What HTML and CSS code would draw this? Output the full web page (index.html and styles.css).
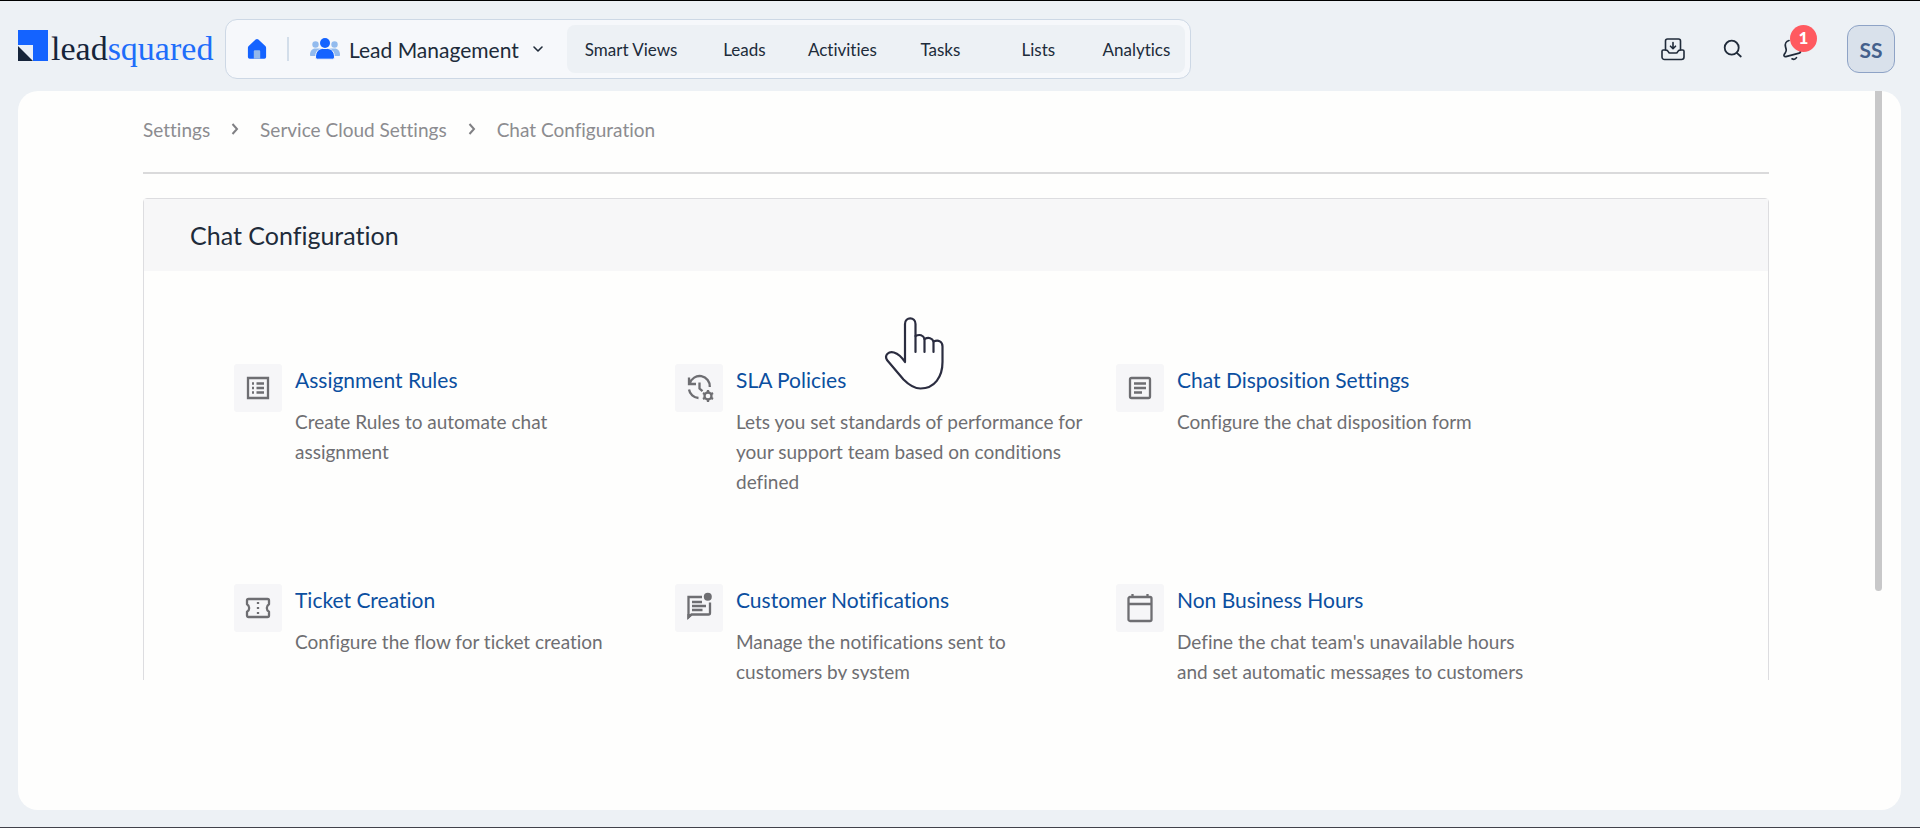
FILE: index.html
```html
<!DOCTYPE html>
<html lang="en">
<head>
    <meta charset="UTF-8">
    <title>Chat Configuration</title>
    <link rel="stylesheet" href="styles.css">
</head>
<body>
<header class="topbar">
    <a class="logo" href="#">
        <svg class="logo-mark" width="30" height="31" viewBox="0 0 30 31">
            <path d="M0 0h30v31H0z" fill="#1463ff"/>
            <path d="M0 15h15v16H0z" fill="#e9eff8"/>
            <path d="M0 16l15 15H0z" fill="#16243a"/>
        </svg>
        <span class="logo-text">lead<span class="logo-blue">squared</span></span>
    </a>
    <nav class="nav">
        <a class="nav-home" href="#" aria-label="Home">
            <svg width="20" height="22" viewBox="0 0 20 22">
                <path d="M8.6 1.6a2 2 0 0 1 2.8 0L18.300 8c.5.5.8 1.100.8 1.800V19a1.800 1.800 0 0 1-1.800 1.800H2.700A1.800 1.800 0 0 1 .9 19V9.800c0-.7.3-1.300.8-1.800z" fill="#1463ff"/>
                <path d="M6.800 13.500c0-.8.5-1.300 1.300-1.300h3.800c.8 0 1.300.5 1.300 1.300v7.300H6.800z" fill="#92b8ea"/>
            </svg>
        </a>
        <span class="nav-divider"></span>
        <button class="nav-app" type="button">
            <svg width="30" height="22" viewBox="0 0 30 22">
                <g fill="#92bbee">
                    <circle cx="5.500" cy="6.500" r="3.200"/>
                    <circle cx="24.500" cy="6.500" r="3.200"/>
                    <path d="M0 17c0-4 2-6.500 5.500-6.500h19c3.500 0 5.500 2.500 5.500 6.500 0 .7-.5 1-1 1H1c-.6 0-1-.4-1-1z"/>
                </g>
                <path d="M5.500 19c0-5 3-8.500 7-8.500h5c4 0 7 3.500 7 8.500 0 1.500-.8 2.200-2 2.200h-15c-1.200 0-2-.7-2-2.200z" fill="#1463ff" stroke="#f6f8fb" stroke-width="1"/>
                <circle cx="15" cy="5" r="5" fill="#1463ff"/>
            </svg>
            <span>Lead Management</span>
            <svg width="10" height="7" viewBox="0 0 10 7" fill="none" stroke="#202b3a" stroke-width="1.600" stroke-linecap="round" stroke-linejoin="round">
                <path d="M1 1l4 4 4-4"/>
            </svg>
        </button>
        <div class="nav-menu">
            <a class="nav-item" href="#">Smart Views</a>
            <a class="nav-item" href="#">Leads</a>
            <a class="nav-item" href="#">Activities</a>
            <a class="nav-item" href="#">Tasks</a>
            <a class="nav-item" href="#">Lists</a>
            <a class="nav-item" href="#">Analytics</a>
        </div>
    </nav>
    <div class="tools">
        <button class="tool" type="button" aria-label="Downloads">
            <svg width="24" height="23" viewBox="0 0 24 23" fill="none" stroke="#202b3a" stroke-width="1.600" stroke-linecap="round" stroke-linejoin="round">
                <path d="M4.500 12V3a2 2 0 0 1 2-2h11a2 2 0 0 1 2 2v9"/>
                <path d="M4.500 12H2.300C1.500 12 1 12.500 1 13.300V19a2.500 2.500 0 0 0 2.500 2.500h17A2.500 2.500 0 0 0 23 19v-5.700c0-.8-.5-1.300-1.300-1.300h-2.200c-1.800 0-2.500.8-3 2-.2.600-.7 1-1.300 1H8.800c-.6 0-1.100-.4-1.300-1-.5-1.200-1.200-2-3-2z"/>
                <path d="M12 4.500v6M9.500 8.200l2.500 2.500 2.500-2.500"/>
            </svg>
        </button>
        <button class="tool" type="button" aria-label="Search">
            <svg width="20" height="20" viewBox="0 0 20 20" fill="none" stroke="#202b3a" stroke-width="1.800" stroke-linecap="round">
                <circle cx="8.700" cy="8.700" r="7"/>
                <path d="M13.800 13.800l4 3.700"/>
            </svg>
        </button>
        <button class="tool tool-bell" type="button" aria-label="Notifications">
            <svg width="24" height="24" viewBox="0 0 24 24" fill="none" stroke="#202b3a" stroke-width="1.700" stroke-linecap="round" stroke-linejoin="round">
                <path d="M8 3.500C5 4.300 3.800 7 4.500 9.800l.7 2.700c.3 1.300-.2 2.400-1 3.500l-.9 1.300c-.9 1.400 0 2.700 1.600 2.300l13.300-3.500c1.600-.4 1.800-2 .5-2.900"/>
                <path d="M11 21.800c1.500.8 3.500.3 4.500-1.200"/>
            </svg>
            <span class="badge">1</span>
        </button>
        <button class="avatar" type="button">SS</button>
    </div>
</header>
<main class="page">
    <div class="content">
        <nav class="crumbs">
            <a href="#">Settings</a>
            <svg width="8" height="12" viewBox="0 0 8 12"><path d="M1.500 1l4.500 5-4.500 5" fill="none" stroke="#808084" stroke-width="2"/></svg>
            <a href="#">Service Cloud Settings</a>
            <svg width="8" height="12" viewBox="0 0 8 12"><path d="M1.500 1l4.500 5-4.500 5" fill="none" stroke="#808084" stroke-width="2"/></svg>
            <span>Chat Configuration</span>
        </nav>
        <section class="panel">
            <h1 class="panel-title">Chat Configuration</h1>
            <div class="cards">
                <article class="card">
                    <div class="card-icon">
                        <svg width="28" height="28" viewBox="0 0 28 28" fill="none" stroke="#6e6e72" stroke-width="2.300">
                            <path d="M4 4h20v20H4z"/>
                            <path d="M8 9.500h2M12.500 9.500H20M8 14h2M12.500 14H20M8 18.500h2M12.500 18.500H20"/>
                        </svg>
                    </div>
                    <div class="card-body">
                        <a class="card-title" href="#">Assignment Rules</a>
                        <p class="card-text">Create Rules to automate chat assignment</p>
                    </div>
                </article>
                <article class="card">
                    <div class="card-icon">
                        <svg width="28" height="28" viewBox="0 0 28 28" fill="none" stroke="#6e6e72" stroke-width="2.300">
                            <path d="M4 3.500v6.500h7M4.800 9.500A10.200 10.200 0 0 1 24.800 13"/>
                            <path d="M4 15.500a10.200 10.200 0 0 0 9.500 8.500M14.500 8.500v6l3 2.700"/>
                            <circle cx="23" cy="22" r="3.500"/>
                            <path d="M23 18.500V16M23 25.500V28M26 20.200l2-1.200M20 20.200l-2-1.200M26 23.800l2 1.200M20 23.800l-2 1.200"/>
                        </svg>
                    </div>
                    <div class="card-body">
                        <a class="card-title" href="#">SLA Policies</a>
                        <p class="card-text">Lets you set standards of performance for your support team based on conditions defined</p>
                    </div>
                </article>
                <article class="card">
                    <div class="card-icon">
                        <svg width="28" height="28" viewBox="0 0 28 28" fill="none" stroke="#6e6e72" stroke-width="2.300">
                            <rect x="4" y="4" width="20" height="20" rx="1.500"/>
                            <path d="M8 9.500h12M8 14h12M8 18.500h8"/>
                        </svg>
                    </div>
                    <div class="card-body">
                        <a class="card-title" href="#">Chat Disposition Settings</a>
                        <p class="card-text">Configure the chat disposition form</p>
                    </div>
                </article>
                <article class="card">
                    <div class="card-icon">
                        <svg width="28" height="28" viewBox="0 0 28 28" fill="none" stroke="#6e6e72" stroke-width="2.300" stroke-linejoin="round">
                            <path d="M4.500 5h19c.9 0 1.500.6 1.500 1.500v3.700a4.400 4.400 0 0 0 0 7.600v3.700c0 .9-.6 1.500-1.500 1.500h-19c-.9 0-1.500-.6-1.500-1.500v-3.700a4.400 4.400 0 0 0 0-7.600V6.500C3 5.600 3.600 5 4.500 5z"/>
                            <path d="M14 8v2M14 13v2M14 18v2"/>
                        </svg>
                    </div>
                    <div class="card-body">
                        <a class="card-title" href="#">Ticket Creation</a>
                        <p class="card-text">Configure the flow for ticket creation</p>
                    </div>
                </article>
                <article class="card">
                    <div class="card-icon">
                        <svg width="28" height="28" viewBox="0 0 28 28">
                            <path d="M17 3H3.500V23l3-2.500h17c1 0 1.500-.6 1.500-1.500V8.500" fill="none" stroke="#6e6e72" stroke-width="2.300"/>
                            <path d="M2.400 26V20h6z" fill="#6e6e72"/>
                            <path d="M7 8h10M7 12h14M7 16h10.500" fill="none" stroke="#6e6e72" stroke-width="2.300"/>
                            <circle cx="22.800" cy="2.700" r="4" fill="#6e6e72"/>
                        </svg>
                    </div>
                    <div class="card-body">
                        <a class="card-title" href="#">Customer Notifications</a>
                        <p class="card-text">Manage the notifications sent to customers by system</p>
                    </div>
                </article>
                <article class="card">
                    <div class="card-icon">
                        <svg width="28" height="28" viewBox="0 0 28 28" fill="none" stroke="#6e6e72" stroke-width="2.300">
                            <rect x="2.500" y="3" width="23" height="24" rx="1.500"/>
                            <path d="M2.500 10h23M6.500 3V0M21.500 3V0"/>
                        </svg>
                    </div>
                    <div class="card-body">
                        <a class="card-title" href="#">Non Business Hours</a>
                        <p class="card-text">Define the chat team's unavailable hours and set automatic messages to customers</p>
                    </div>
                </article>
            </div>
        </section>
    </div>
    <div class="scrollbar"></div>
    <svg class="pointer" width="60" height="74" viewBox="0 0 60 74" fill="#fff" stroke="#2b2d40" stroke-width="2.200" stroke-linejoin="round">
        <path d="M20 45V7c0-7.500 10.500-7.500 10.500 0v12c4-2 8-1 9 3 4-2 8-1 9 2.500 5-2 9 0 9 5V45c0 15-8 26.500-22 26.500-7 0-12-4-17-9L2 43c-3-5 2-9 7-7.500 4 1.200 8 5 11 9.500z"/>
        <path d="M30.500 19v16M39.500 22v13M48.500 24.500V35" fill="none" stroke-linecap="round"/>
    </svg>
</main>
</body>
</html>
```
FILE: styles.css
```css
* {
    box-sizing: border-box;
}
body {
    margin: 0;
    min-height: 100vh;
    display: flex;
    flex-direction: column;
    padding-bottom: 17px;
    border-top: 1px solid #000;
    border-bottom: 1px solid #41424a;
    background-color: #edf1f5;
    color: #202b3a;
    font-family: Lato, "Open Sans", sans-serif;
    font-size: 19px;
    font-variant-ligatures: none;
}
a {
    color: inherit;
    text-decoration: none;
}
button {
    padding: 0;
    border: none;
    background: none;
    color: inherit;
    font: inherit;
    cursor: pointer;
}
svg {
    flex: none;
    display: block;
    overflow: visible;
}

/* top bar */
.topbar {
    display: flex;
    align-items: center;
    height: 90px;
    padding: 6px 25px 0 18px;
}
.logo {
    display: flex;
    align-items: flex-start;
    width: 207px;
    gap: 3px;
}
.logo-text {
    font-family: "Liberation Serif", serif;
    font-size: 34px;
    line-height: 38px;
    color: #16243a;
}
.logo-blue {
    color: #1e6dfa;
}
.nav {
    display: flex;
    align-items: center;
    height: 60px;
    padding: 5px;
    border: 1px solid #cdd8e5;
    border-radius: 12px;
    background-color: #f6f8fb;
}
.nav-home {
    padding: 0 20px 0 16px;
}
.nav-divider {
    width: 2px;
    height: 24px;
    background-color: #d3deea;
}
.nav-app {
    display: flex;
    align-items: center;
    padding: 0 24px 0 21px;
    font-size: 21px;
}
.nav-app span {
    padding: 0 14px 0 9px;
}
.nav-menu {
    display: flex;
    height: 48px;
    border-radius: 8px;
    background-color: #edf1f5;
}
.nav-item {
    min-width: 98px;
    padding: 0 12px;
    font-size: 17px;
    line-height: 50px;
    text-align: center;
}
.nav-item:first-child {
    padding: 0 18px;
}
.tools {
    display: flex;
    align-items: center;
    margin-left: auto;
}
.tool {
    margin-right: 38px;
}
.tool-bell {
    position: relative;
    margin-right: 42px;
}
.badge {
    position: absolute;
    top: -12px;
    left: 9px;
    width: 27px;
    height: 27px;
    border-radius: 50%;
    background-color: #ff5a60;
    color: #fff;
    font-size: 17px;
    font-weight: 900;
    line-height: 26px;
}
.avatar {
    width: 48px;
    height: 48px;
    border: 1px solid #8ea3c6;
    border-radius: 12px;
    background-color: #d9e1eb;
    color: #44608c;
    font-size: 21px;
    font-weight: bold;
}

/* page */
.page {
    position: relative;
    flex: 1;
    display: flex;
    align-items: flex-start;
    margin: 0 19px 0 18px;
    padding-right: 19px;
    border-radius: 20px;
    background-color: #fefefd;
}
.content {
    flex: 1;
    height: 589px;
    overflow: hidden;
    padding: 0 106px 0 125px;
}
.scrollbar {
    width: 7px;
    height: 500px;
    border-radius: 0 0 4px 4px;
    background-color: #c8c8c9;
}
.crumbs {
    display: flex;
    align-items: center;
    gap: 21px;
    height: 83px;
    padding-bottom: 5px;
    border-bottom: 2px solid #dadadb;
    color: #8c8c90;
    font-size: 19px;
}
.panel {
    margin-top: 24px;
    border: 1px solid #dddde0;
    border-radius: 4px;
}
.panel-title {
    margin: 0;
    padding: 0 46px;
    background-color: #f7f7f8;
    font-size: 25px;
    font-weight: normal;
    line-height: 72px;
}
.cards {
    display: grid;
    grid-template-columns: repeat(3, 1fr);
    grid-auto-rows: 220px;
    padding: 93px 211px 0 90px;
}
.card {
    display: flex;
    gap: 13px;
}
.card-icon {
    flex: none;
    display: flex;
    align-items: center;
    justify-content: center;
    width: 48px;
    height: 48px;
    border-radius: 3px;
    background-color: #f6f6f8;
}
.card-body {
    max-width: 350px;
}
.card-title {
    color: #0b4fa0;
    font-size: 21px;
    line-height: 32px;
}
.card-text {
    margin: 11px 0 0;
    color: #6e6e72;
    font-size: 19px;
    line-height: 30px;
}

/* hand pointer over the page */
.pointer {
    position: absolute;
    top: 226px;
    left: 867px;
}
```
